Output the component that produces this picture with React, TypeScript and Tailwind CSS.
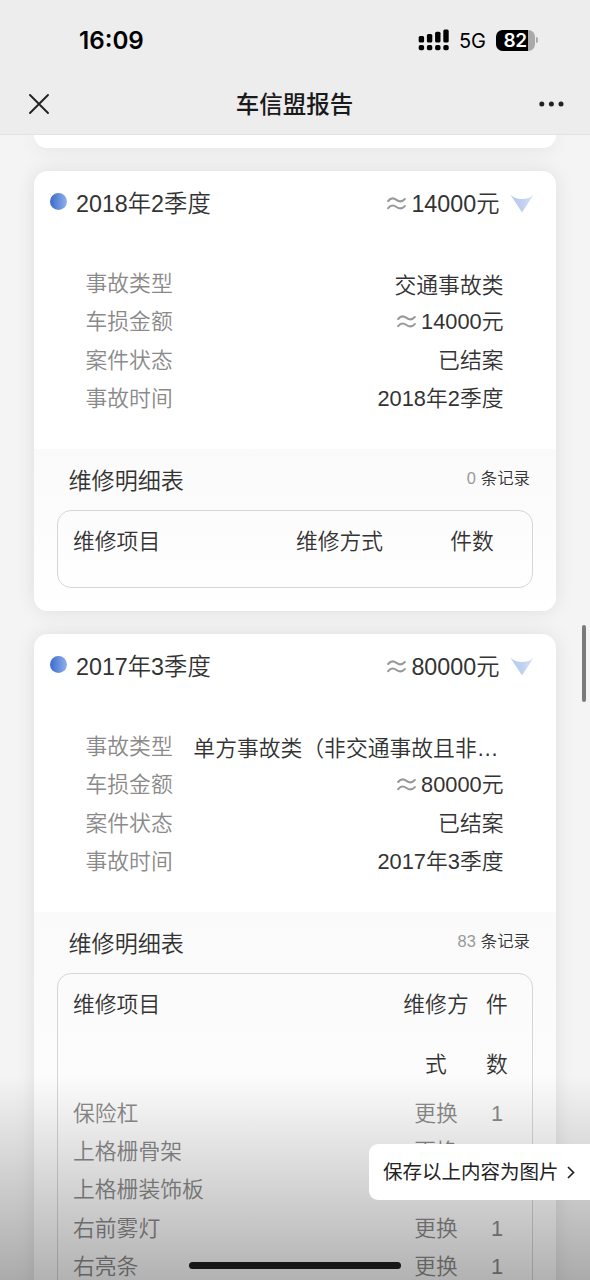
import clsx from "clsx";

type Repair = { name: string; method: string; count: number };

type Claim = {
  quarter: string;
  type: string;
  amount: string;
  status: string;
  total: number;
  repairs: Repair[];
};

const claims: Claim[] = [
  {
    quarter: "2018年2季度",
    type: "交通事故类",
    amount: "14000元",
    status: "已结案",
    total: 0,
    repairs: [],
  },
  {
    quarter: "2017年3季度",
    type: "单方事故类（非交通事故且非…",
    amount: "80000元",
    status: "已结案",
    total: 83,
    repairs: [
      { name: "保险杠", method: "更换", count: 1 },
      { name: "上格栅骨架", method: "更换", count: 1 },
      { name: "上格栅装饰板", method: "更换", count: 1 },
      { name: "右前雾灯", method: "更换", count: 1 },
      { name: "右亮条", method: "更换", count: 1 },
    ],
  },
];

const cardShadow = "shadow-[0_0_20px_rgba(0,0,0,0.09)]";

const StatusBar = () => (
  <div className="flex h-[80px] items-center justify-between pr-[55px] pl-[79px]">
    <span className="mt-[2px] font-['Inter'] text-[24.2px] leading-none font-semibold text-black">
      16:09
    </span>
    <div className="flex items-center">
      <svg width="32" height="22" viewBox="0 0 32 22" fill="#000">
        <rect x="0.7" y="7" width="5.4" height="6.5" rx="1.5" />
        <rect x="8.9" y="5" width="5.4" height="8.5" rx="1.5" />
        <rect x="17.1" y="2.8" width="5.4" height="10.7" rx="1.5" />
        <rect x="25.3" y="0.6" width="5.4" height="12.9" rx="1.5" />
        <rect x="0.7" y="16" width="5.4" height="5.2" rx="1.8" />
        <rect x="8.9" y="16" width="5.4" height="5.2" rx="1.8" />
        <rect x="17.1" y="16" width="5.4" height="5.2" rx="1.8" />
        <rect x="25.3" y="16" width="5.4" height="5.2" rx="1.8" />
      </svg>
      <span className="mt-[2px] ml-[9px] w-[27px] font-['Inter'] text-[20px] leading-none font-normal tracking-[-0.2px] text-black">
        5G
      </span>
      <div className="ml-[10px] flex h-[21px] w-[39px] items-center overflow-hidden rounded-[6.5px] bg-[linear-gradient(to_right,#000_0,#000_32px,#a9a9a9_32px)]">
        <span className="w-full pr-[1px] text-center font-['Inter'] text-[19px] leading-none font-semibold tracking-[-0.5px] text-white">
          82
        </span>
      </div>
      <div className="-mr-[3px] ml-[1px] h-[6px] w-[2px] rounded-r-full bg-[#aaa]" />
    </div>
  </div>
);

const NavBar = () => (
  <div className="grid h-[54px] grid-cols-[1fr_auto_1fr] items-center pr-[26px] pb-[6px] pl-[29px]">
    <svg width="20" height="20" viewBox="0 0 20 20" stroke="#222" strokeWidth="1.9" strokeLinecap="round">
      <path d="M1 1 L19 19 M19 1 L1 19" />
    </svg>
    <h1 className="mt-[4px] mr-[4px] text-[23.5px] leading-none font-medium text-[#1a1a1a]">
      车信盟报告
    </h1>
    <svg className="justify-self-end" width="25" height="6" viewBox="0 0 25 6" fill="#222">
      <circle cx="2.8" cy="3" r="2.5" />
      <circle cx="12.4" cy="3" r="2.5" />
      <circle cx="22" cy="3" r="2.5" />
    </svg>
  </div>
);

const Approx = ({ className }: { className?: string }) => (
  <svg
    className={className}
    width="19"
    height="13"
    viewBox="0 0 19 13"
    fill="none"
    stroke="#999"
    strokeWidth="2.1"
    strokeLinecap="round"
  >
    <path d="M1.2 4 C4 0.4 6.6 0.8 9.5 2.9 C12.4 5 15 5 17.8 2" />
    <path d="M1.2 11.1 C4 7.5 6.6 7.9 9.5 10 C12.4 12.1 15 12.1 17.8 9.1" />
  </svg>
);

const Arrow = () => (
  <svg className="ml-[10px]" width="24" height="19" viewBox="0 0 24 19">
    <defs>
      <linearGradient id="arrow" x1="0" x2="1" y1="0" y2="0">
        <stop offset="0" stopColor="#b5c9ee" />
        <stop offset="0.5" stopColor="#bfd0f0" />
        <stop offset="1" stopColor="#d7e2f6" />
      </linearGradient>
    </defs>
    <path d="M0.3 0.4 C6 6.5 18 6.5 23.7 0.4 L12 18.5 Z" fill="url(#arrow)" />
  </svg>
);

const DetailRow = ({ label, children }: { label: string; children: React.ReactNode }) => (
  <div className="flex h-[38.5px] items-center justify-between">
    <span className="shrink-0 text-[#8a8a8a]">{label}</span>
    <span className="flex items-center whitespace-nowrap text-[#333]">{children}</span>
  </div>
);

const RepairTable = ({ repairs }: { repairs: Repair[] }) => {
  const empty = repairs.length === 0;
  const row = clsx(
    "grid pl-[15px]",
    empty ? "grid-cols-[1fr_145px_120px]" : "grid-cols-[1fr_80px_42px] pr-[14px]",
  );

  return (
    <div className="mx-[23px] rounded-[14px] border border-[#d6d6d6] pb-[15px] text-[21.8px]">
      <div className={clsx(row, "pt-[0.5px] leading-[60px] text-[#333]")}>
        <span>维修项目</span>
        <span className="text-center">维修方式</span>
        <span className="text-center">件数</span>
      </div>
      {repairs.map((repair) => (
        <div key={repair.name} className={clsx(row, "h-[38.4px] leading-[38px] text-[#8a8a8a]")}>
          <span>{repair.name}</span>
          <span className="text-center">{repair.method}</span>
          <span className="text-center">{repair.count}</span>
        </div>
      ))}
    </div>
  );
};

const ClaimCard = ({ claim }: { claim: Claim }) => (
  <section className={clsx("mb-[23px] overflow-hidden rounded-[14px] bg-white", cardShadow)}>
    <div className="flex h-[64px] items-center pr-[22.5px] pl-[16px] text-[23.3px] leading-none text-[#333]">
      <span className="mb-[3px] size-[17px] rounded-full bg-linear-to-r from-[#3c6bca] to-[#8fb0ea]" />
      <span className="mt-[3px] ml-[9px] flex-1">{claim.quarter}</span>
      <Approx className="-mr-px" />
      <span className="mt-[3px] ml-[6px]">{claim.amount}</span>
      <Arrow />
    </div>

    <div className="mt-[29.5px] h-[184.5px] pr-[52.5px] pl-[51.5px] text-[21.8px] leading-[30px]">
      <DetailRow label="事故类型">
        <span className={clsx("mt-[4px]", claim.type.endsWith("…") && "mr-[5px]")}>{claim.type}</span>
      </DetailRow>
      <DetailRow label="车损金额">
        <Approx className="mr-[5px] mb-[2px]" />
        {claim.amount}
      </DetailRow>
      <DetailRow label="案件状态">{claim.status}</DetailRow>
      <DetailRow label="事故时间">{claim.quarter}</DetailRow>
    </div>

    <div className="bg-linear-to-b from-[#fafafa] to-white pb-[23.5px]">
      <div className="flex h-[61px] items-center justify-between pr-[26px] pl-[34.5px] text-[#333]">
        <h2 className="mt-[3px] text-[23.1px]">维修明细表</h2>
        <span className="mb-[2px] text-[16.4px]">
          <span className="mr-[5px] text-[#999]">{claim.total}</span>
          条记录
        </span>
      </div>
      <RepairTable repairs={claim.repairs} />
    </div>
  </section>
);

export default function App() {
  return (
    <div className="relative h-[1280px] w-[590px] overflow-hidden bg-[#f4f4f4] font-['Liberation_Sans','Noto_Sans_CJK_SC',sans-serif] font-[350]">
      <header className="relative z-10 h-[135px] border-b border-[#e2e2e2] bg-[#ededed]">
        <StatusBar />
        <NavBar />
      </header>

      <main className="h-[1145px] overflow-hidden px-[34px]">
        <div className={clsx("mb-[23px] h-[13px] rounded-b-[14px] bg-white", cardShadow)} />
        {claims.map((claim) => (
          <ClaimCard key={claim.quarter} claim={claim} />
        ))}
      </main>

      <div className="absolute top-[625px] right-[4px] h-[77px] w-[4px] rounded-full bg-[#7b7b7b]" />
      <div className="absolute inset-x-0 bottom-0 h-[205px] bg-linear-to-b from-transparent to-black/30" />
      <button className="absolute top-[1144px] right-0 flex h-[56px] w-[221px] items-center rounded-l-[9px] bg-white pt-[1px] pl-[14px] text-[19.5px] font-normal text-[#222]">
        保存以上内容为图片
        <svg className="ml-[8px]" width="8" height="13" viewBox="0 0 8 13" fill="none" stroke="#222" strokeWidth="1.7">
          <path d="M1 1 L6.5 6.5 L1 12" />
        </svg>
      </button>
      <div className="absolute bottom-[11px] left-[189px] h-[7px] w-[212px] rounded-full bg-[#171717]" />
    </div>
  );
}
